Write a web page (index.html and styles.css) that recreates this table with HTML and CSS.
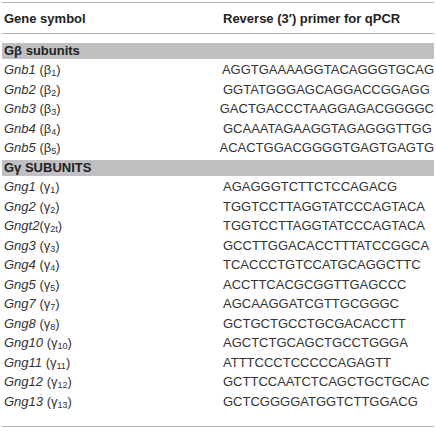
FILE: index.html
```html
<!DOCTYPE html>
<html>
<head>
<meta charset="utf-8">
<link rel="stylesheet" href="styles.css">
</head>
<body>
<div class="table">
  <div class="head">
    <div class="c1">Gene symbol</div>
    <div class="c2">Reverse (3′) primer for qPCR</div>
  </div>
  <div class="band"><div class="fill">Gβ subunits</div></div>
  <div class="row"><div class="c1"><i>Gnb1</i> (β<sub>1</sub>)</div><div class="c2">AGGTGAAAAGGTACAGGGTGCAG</div></div>
  <div class="row"><div class="c1"><i>Gnb2</i> (β<sub>2</sub>)</div><div class="c2">GGTATGGGAGCAGGACCGGAGG</div></div>
  <div class="row"><div class="c1"><i>Gnb3</i> (β<sub>3</sub>)</div><div class="c2">GACTGACCCTAAGGAGACGGGGC</div></div>
  <div class="row"><div class="c1"><i>Gnb4</i> (β<sub>4</sub>)</div><div class="c2">GCAAATAGAAGGTAGAGGGTTGG</div></div>
  <div class="row"><div class="c1"><i>Gnb5</i> (β<sub>5</sub>)</div><div class="c2">ACACTGGACGGGGTGAGTGAGTG</div></div>
  <div class="band"><div class="fill">Gγ SUBUNITS</div></div>
  <div class="row"><div class="c1"><i>Gng1</i> (γ<sub>1</sub>)</div><div class="c2">AGAGGGTCTTCTCCAGACG</div></div>
  <div class="row"><div class="c1"><i>Gng2</i> (γ<sub>2</sub>)</div><div class="c2">TGGTCCTTAGGTATCCCAGTACA</div></div>
  <div class="row"><div class="c1"><i>Gngt2</i>(γ<sub>2t</sub>)</div><div class="c2">TGGTCCTTAGGTATCCCAGTACA</div></div>
  <div class="row"><div class="c1"><i>Gng3</i> (γ<sub>3</sub>)</div><div class="c2">GCCTTGGACACCTTTATCCGGCA</div></div>
  <div class="row"><div class="c1"><i>Gng4</i> (γ<sub>4</sub>)</div><div class="c2">TCACCCTGTCCATGCAGGCTTC</div></div>
  <div class="row"><div class="c1"><i>Gng5</i> (γ<sub>5</sub>)</div><div class="c2">ACCTTCACGCGGTTGAGCCC</div></div>
  <div class="row"><div class="c1"><i>Gng7</i> (γ<sub>7</sub>)</div><div class="c2">AGCAAGGATCGTTGCGGGC</div></div>
  <div class="row"><div class="c1"><i>Gng8</i> (γ<sub>8</sub>)</div><div class="c2">GCTGCTGCCTGCGACACCTT</div></div>
  <div class="row"><div class="c1"><i>Gng10</i> (γ<sub>10</sub>)</div><div class="c2">AGCTCTGCAGCTGCCTGGGA</div></div>
  <div class="row"><div class="c1"><i>Gng11</i> (γ<sub>11</sub>)</div><div class="c2">ATTTCCCTCCCCCAGAGTT</div></div>
  <div class="row"><div class="c1"><i>Gng12</i> (γ<sub>12</sub>)</div><div class="c2">GCTTCCAATCTCAGCTGCTGCAC</div></div>
  <div class="row"><div class="c1"><i>Gng13</i> (γ<sub>13</sub>)</div><div class="c2">GCTCGGGGATGGTCTTGGACG</div></div>
</div>
</body>
</html>
```
FILE: styles.css
```css
html, body {
  margin: 0;
  padding: 0;
  background: #fff;
}
body {
  font-family: "Liberation Sans", Arial, sans-serif;
  font-size: 13px;
  color: #333;
}
.table {
  width: 432px;
  margin: 2px 0 0 2px;
  border-top: 1.5px solid #b4b4b4;
  border-bottom: 1.5px solid #b4b4b4;
  padding-bottom: 14px;
}
.head {
  display: flex;
  height: 30px;
  align-items: center;
  font-weight: bold;
  color: #222;
  border-bottom: 1.5px solid #b4b4b4;
  margin-bottom: 7px;
}
.c1 {
  width: 221px;
  padding-left: 2px;
  box-sizing: border-box;
}
.c2 {
  flex: 1;
  white-space: nowrap;
}
.band {
  height: 19.5px;
  box-sizing: border-box;
  padding-top: 2px;
}
.fill {
  height: 16px;
  line-height: 16px;
  background: #c0c0c2;
  font-weight: bold;
  color: #222;
  padding-left: 2px;
}
.row {
  display: flex;
  height: 19.5px;
  align-items: center;
  line-height: 16px;
}
sub {
  font-size: 9px;
  vertical-align: -2px;
  line-height: 0;
}
```
